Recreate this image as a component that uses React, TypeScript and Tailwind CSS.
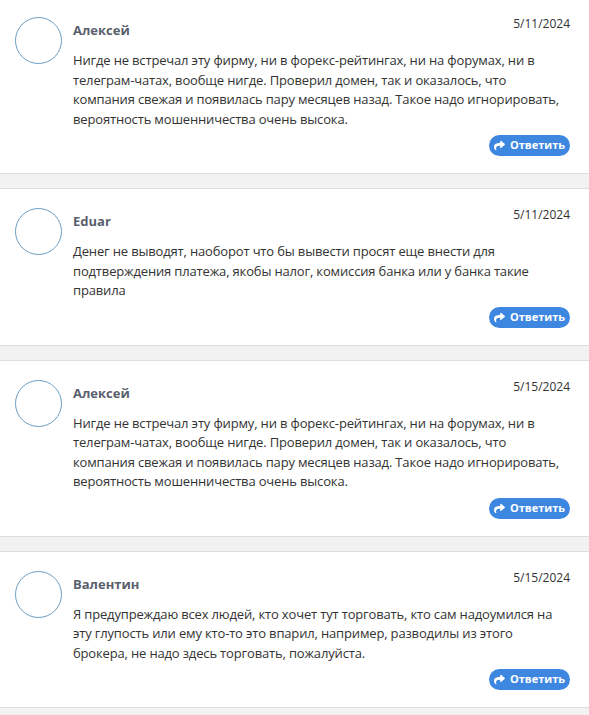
import { FaShare } from 'react-icons/fa'

type Review = {
  name: string
  date: string
  text: string
}

const reviews: Review[] = [
  {
    name: 'Алексей',
    date: '5/11/2024',
    text: 'Нигде не встречал эту фирму, ни в форекс-рейтингах, ни на форумах, ни в телеграм-чатах, вообще нигде. Проверил домен, так и оказалось, что компания свежая и появилась пару месяцев назад. Такое надо игнорировать, вероятность мошенничества очень высока.',
  },
  {
    name: 'Eduar',
    date: '5/11/2024',
    text: 'Денег не выводят, наоборот что бы вывести просят еще внести для подтверждения платежа, якобы налог, комиссия банка или у банка такие правила',
  },
  {
    name: 'Алексей',
    date: '5/15/2024',
    text: 'Нигде не встречал эту фирму, ни в форекс-рейтингах, ни на форумах, ни в телеграм-чатах, вообще нигде. Проверил домен, так и оказалось, что компания свежая и появилась пару месяцев назад. Такое надо игнорировать, вероятность мошенничества очень высока.',
  },
  {
    name: 'Валентин',
    date: '5/15/2024',
    text: 'Я предупреждаю всех людей, кто хочет тут торговать, кто сам надоумился на эту глупость или ему кто-то это впарил, например, разводилы из этого брокера, не надо здесь торговать, пожалуйста.',
  },
]

function ReviewCard({ review, first }: { review: Review; first: boolean }) {
  return (
    <div className={`bg-white flex pl-[15px] pr-[19px] pb-[17px] ${first ? 'pt-[16px]' : 'pt-[18px]'}`}>
      {/* аватар */}
      <div className="w-[47px] h-[47px] mt-[1px] rounded-full border border-[#6b9dc2] shrink-0" />
      <div className="flex-1 ml-[11px] flex flex-col">
        <div className="flex items-start justify-between">
          <span className="mt-[5px] text-[13px] leading-[18px] font-bold text-[#5a5f6e]">{review.name}</span>
          <span className="text-[12px] leading-[16px] text-[#333]">{review.date}</span>
        </div>
        <p className="mt-[12px] text-[13px] leading-[19.5px] tracking-[-0.16px] text-[#333]">{review.text}</p>
        <div className="flex justify-end mt-[6px]">
          <button
            type="button"
            className="h-[21px] w-[81px] rounded-full bg-[#3d87e0] text-white text-[11px] font-bold flex items-center justify-center gap-[5px]"
          >
            <FaShare className="w-[11px] h-[11px]" />
            Ответить
          </button>
        </div>
      </div>
    </div>
  )
}

export default function App() {
  return (
    <div className="w-[589px] h-[715px] overflow-hidden bg-white font-['Open_Sans',sans-serif]">
      {reviews.map((r, i) => (
        <div key={i}>
          <ReviewCard review={r} first={i === 0} />
          <div className="h-[16px] bg-[#f2f2f2] border-y border-[#dedede]" />
        </div>
      ))}
    </div>
  )
}
